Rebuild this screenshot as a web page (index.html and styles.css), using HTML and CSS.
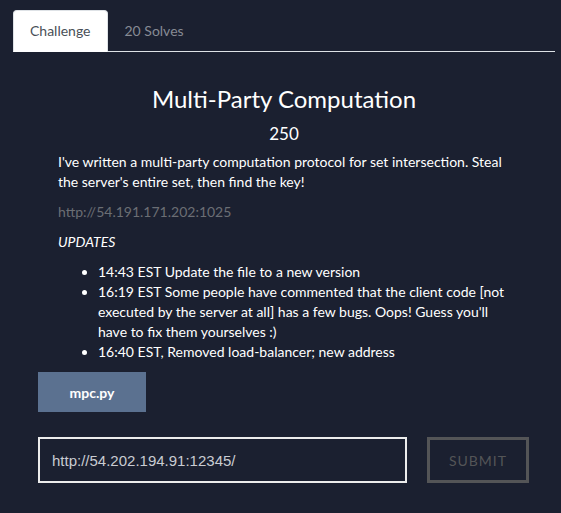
FILE: index.html
```html
<!DOCTYPE html>
<html>
<head>
<meta charset="utf-8">
<link rel="stylesheet" href="styles.css">
</head>
<body>
<div class="modal">
  <ul class="tabs">
    <li class="tab active">Challenge</li>
    <li class="tab">20 Solves</li>
  </ul>
  <div class="body">
    <h2 class="title">Multi-Party Computation</h2>
    <div class="value">250</div>
    <div class="desc">
      <p>I've written a multi-party computation protocol for set intersection. Steal the server's entire set, then find the key!</p>
      <p class="url">http://54.191.171.202:1025</p>
      <p class="updates">UPDATES</p>
      <ul class="list">
        <li>14:43 EST Update the file to a new version</li>
        <li>16:19 EST Some people have commented that the client code [not executed by the server at all] has a few bugs. Oops! Guess you'll have to fix them yourselves :)</li>
        <li>16:40 EST, Removed load-balancer; new address</li>
      </ul>
    </div>
    <div class="files"><a class="file">mpc.py</a></div>
    <div class="submit-row">
      <div class="input">http://54.202.194.91:12345/</div>
      <div class="submit">SUBMIT</div>
    </div>
  </div>
</div>
</body>
</html>
```
FILE: styles.css
```css
html, body {
  margin: 0;
  padding: 0;
  background: #1b2030;
  font-family: Lato, "Noto Sans", sans-serif;
  color: #ffffff;
}
.modal {
  padding: 10px 6px 0 13px;
}
.tabs {
  list-style: none;
  margin: 0;
  padding: 0;
  display: flex;
  border-bottom: 1px solid #dee2e6;
}
.tab {
  font-size: 14px;
  line-height: 24px;
  padding: 8px 16px;
  margin-bottom: -1px;
  border: 1px solid transparent;
  border-top-left-radius: 4px;
  border-top-right-radius: 4px;
  color: #878b94;
}
.tab.active {
  background: #ffffff;
  color: #495057;
  border-color: #dee2e6 #dee2e6 #ffffff;
}
.body {
  padding: 0 0 0 25px;
}
.title {
  margin: 32px 0 0 -25px;
  font-size: 24px;
  line-height: 30px;
  font-weight: 400;
  text-align: center;
}
.value {
  margin: 8px 0 0 -25px;
  font-size: 17px;
  line-height: 24px;
  text-align: center;
}
.desc {
  padding: 0 36px 0 20px;
  margin-top: 6px;
  font-size: 14px;
  line-height: 20px;
}
.desc p {
  margin: 0 0 10px;
}
.url {
  color: #6b6e74;
}
.updates {
  font-style: italic;
}
.list {
  margin: 0;
  padding-left: 40px;
}
.files {
  margin-top: 10px;
  display: flex;
}
.file {
  width: 108px;
  height: 40px;
  background: #5b7190;
  color: #ffffff;
  font-weight: 700;
  font-size: 14px;
  display: flex;
  align-items: center;
  justify-content: center;
}
.submit-row {
  margin-top: 25px;
  display: flex;
  gap: 20px;
}
.input {
  height: 42px;
  border: 2px solid #ececec;
  font-family: "Liberation Sans", Arial, sans-serif;
  font-size: 15px;
  color: #c9ccd2;
  display: flex;
  align-items: center;
  padding-left: 12px;
  box-sizing: content-box;
  width: 353px;
}
.submit {
  width: 96px;
  height: 40px;
  border: 3px solid #545557;
  color: #545557;
  font-size: 14px;
  letter-spacing: 1px;
  display: flex;
  align-items: center;
  justify-content: center;
}
```
